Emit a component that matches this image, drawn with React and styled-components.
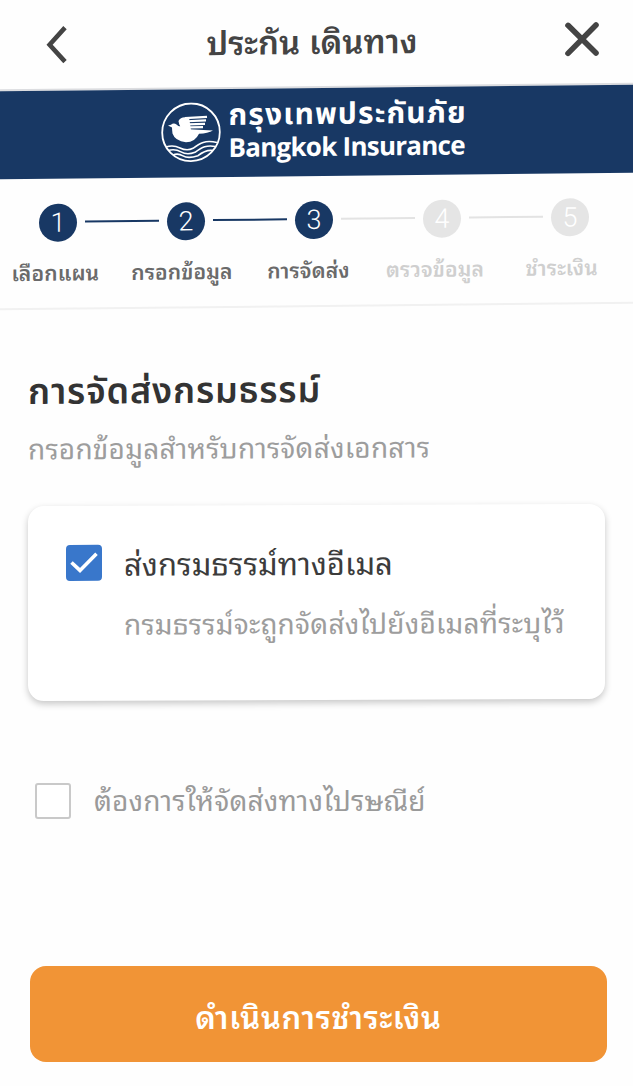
import React from "react";
import styled, { createGlobalStyle } from "styled-components";

const looped = `"Noto Sans Thai Looped", Loma, Garuda, Waree, "Noto Sans Thai", "Noto Sans", "Liberation Sans", sans-serif`;
const loopless = `"Noto Sans Thai", "Noto Sans", "Liberation Sans", sans-serif`;

const GlobalStyle = createGlobalStyle`
    * {
        box-sizing: border-box;
    }

    body {
        margin: 0;
        background: #fefefe;
        font-family: ${looped};
        overflow: hidden;
    }

    h1, h2, p {
        margin: 0;
    }
`;

const Page = styled.main`
    display: flex;
    flex-direction: column;
    width: 633px;
    height: 1086px;
    overflow: hidden;
`;

const Top = styled.header`
    flex: none;
    height: 307px;
    border-bottom: 2px solid #f1f1f1;
    transform: skewY(-0.6deg);
`;

const TitleBar = styled.div`
    display: flex;
    align-items: center;
    justify-content: space-between;
    height: 88px;
    padding: 0 33px 2px 46px;
    border-bottom: 2px solid #dcdde0;
`;

const Title = styled.h1`
    padding: 0 8px 4px 0;
    font-size: 33px;
    line-height: 48px;
    font-weight: 600;
    color: #444;
    white-space: nowrap;
`;

const IconButton = styled.button`
    display: flex;
    padding: 0;
    border: none;
    background: none;
    color: #444;
`;

const Banner = styled.div`
    display: flex;
    align-items: center;
    justify-content: center;
    gap: 8px;
    height: 88px;
    padding: 0 7px 2px 0;
    background: #183864;
    color: #fff;
`;

const BrandText = styled.div`
    display: flex;
    flex-direction: column;
    width: 237px;
    padding-bottom: 3px;
    font-weight: 700;
    white-space: nowrap;
`;

const BrandThai = styled.span`
    font-family: ${loopless};
    font-size: 30px;
    line-height: 34px;
    letter-spacing: 1.1px;
`;

const BrandLatin = styled.span`
    font-family: "Open Sans", "Noto Sans", sans-serif;
    font-size: 26px;
    line-height: 29px;
    letter-spacing: -0.75px;
`;

const Track = styled.div`
    display: flex;
    align-items: center;
    gap: 8px;
    padding: 25px 0 0 39px;
`;

const Circle = styled.span`
    display: flex;
    align-items: center;
    justify-content: center;
    flex: none;
    width: 38px;
    height: 38px;
    border-radius: 50%;
    background: ${(props) => (props.$done ? "#183864" : "#e5e5e5")};
    color: #fff;
    font-family: Roboto, "Liberation Sans", sans-serif;
    font-size: 27px;
    font-weight: 300;
`;

const Connector = styled.span`
    flex: none;
    width: 74px;
    height: 2px;
    margin-bottom: 3px;
    background: ${(props) => (props.$done ? "#183864" : "#e3e3e3")};
`;

const Labels = styled.div`
    display: grid;
    grid-template-columns: repeat(5, 126.6px);
    margin: 11px 0 0 -8px;
`;

const Label = styled.span`
    font-size: 21px;
    line-height: 38px;
    font-weight: 600;
    letter-spacing: 0.1px;
    text-align: center;
    white-space: nowrap;
    color: ${(props) => (props.$done ? "#6a6a6a" : "#cfcfcf")};
`;

const Content = styled.section`
    flex: 1;
    display: flex;
    flex-direction: column;
    padding: 56px 26px 24px 28px;
`;

const Heading = styled.h2`
    font-family: ${loopless};
    font-size: 36px;
    line-height: 56px;
    font-weight: 600;
    letter-spacing: 0.8px;
    color: #333;
    white-space: nowrap;
    transform: skewY(-0.4deg);
`;

const Subheading = styled.p`
    margin-top: 1px;
    font-size: 28px;
    line-height: 52px;
    letter-spacing: 0.2px;
    color: #9d9d9d;
    white-space: nowrap;
    transform: skewY(-0.3deg);
`;

const Card = styled.label`
    display: flex;
    align-items: flex-start;
    gap: 22px;
    width: 577px;
    height: 195px;
    margin-top: 33px;
    padding: 39px 0 0 38px;
    border-radius: 16px;
    background: #fff;
    box-shadow: 0 3px 7px rgba(0, 0, 0, 0.22);
    transform: skewY(-0.22deg);
`;

const Box = styled.span`
    display: flex;
    align-items: center;
    justify-content: center;
    flex: none;
    width: 36px;
    height: 36px;
    border-radius: ${(props) => (props.$checked ? "4px" : "3px")};
    border: ${(props) => (props.$checked ? "none" : "2px solid #c9c9c9")};
    background: ${(props) => (props.$checked ? "#3977cb" : "#fff")};
`;

const OptionTitle = styled.p`
    font-size: 31px;
    line-height: 34px;
    color: #3c3c3c;
    white-space: nowrap;
`;

const OptionText = styled.p`
    margin-top: 24px;
    font-size: 28px;
    line-height: 40px;
    letter-spacing: 0.2px;
    color: #9d9d9d;
    white-space: nowrap;
`;

const PostOption = styled.label`
    display: flex;
    align-items: center;
    gap: 23px;
    height: 40px;
    margin: 81px 0 0 7px;
    font-size: 28px;
    letter-spacing: 0.15px;
    color: #9a9a9a;
    white-space: nowrap;
`;

const PostText = styled.span`
    padding-bottom: 6px;
`;

const SubmitButton = styled.button`
    width: 577px;
    height: 96px;
    margin: auto 0 0 2px;
    padding: 2px 0 0;
    border: none;
    border-radius: 16px;
    background: #f19436;
    color: #fff;
    font-family: inherit;
    font-size: 31px;
    font-weight: 600;
    letter-spacing: 0.7px;
`;

const steps = [
    "เลือกแผน",
    "กรอกข้อมูล",
    "การจัดส่ง",
    "ตรวจข้อมูล",
    "ชำระเงิน",
];
const currentStep = 3;

function BirdLogo() {
    return (
        <svg width="60" height="60" viewBox="0 0 60 60" fill="none" stroke="#fff">
            <circle cx="30" cy="30" r="28.8" strokeWidth="1.8" />
            {/* head, body and tail */}
            <path
                fill="#fff"
                stroke="none"
                d="M7 23 L10 22.3 Q12.5 19.8 15.5 22 Q17 24 20 24 Q16.5 20 18.5 17.5 L22 20 L28 27 L52 28.3 Q47 31 38 31.5 Q34 40 25 40 Q14 38.5 11.5 31 Q11 27 11 25 Z"
            />
            {/* wing feathers */}
            <path fill="#fff" stroke="none" d="M17.5 18.5 Q19 14.8 24 14.8 L28 15 L30 28 L20 27 Z" />
            <g strokeWidth="2.2">
                <path d="M24 15.8 L46 14.8" />
                <path d="M26 18.9 L45 18.3" />
                <path d="M27 22 L44 21.7" />
                <path d="M28 25.1 L42 25" />
            </g>
            <g strokeWidth="1.6">
                <path d="M5 44.5 Q12 42 19 45.5 T32 46 C39 41 44 37.5 56 40.5" />
                <path d="M7 48 Q14 46 20 49.5 T34 50 C41 45 46 42.5 54.5 44.5" />
                <path d="M12 52.5 Q17 50.5 22 53.5 T37 53.5 C42 49.5 46 47.5 52 48.5" />
            </g>
        </svg>
    );
}

function App() {
    return (
        <Page>
            <GlobalStyle />
            <Top>
                <TitleBar>
                    <IconButton aria-label="Back">
                        <svg width="22" height="38" viewBox="0 0 22 38" fill="none" stroke="currentColor" strokeWidth="4.6">
                            <path d="M19 2 L3.6 19 L19 36" />
                        </svg>
                    </IconButton>
                    <Title>ประกัน เดินทาง</Title>
                    <IconButton aria-label="Close">
                        <svg width="36" height="36" viewBox="0 0 36 36" fill="none" stroke="currentColor" strokeWidth="5.6" strokeLinecap="round">
                            <path d="M4 4 L32 32 M32 4 L4 32" />
                        </svg>
                    </IconButton>
                </TitleBar>
                <Banner>
                    <BirdLogo />
                    <BrandText>
                        <BrandThai>กรุงเทพประกันภัย</BrandThai>
                        <BrandLatin>Bangkok Insurance</BrandLatin>
                    </BrandText>
                </Banner>
                <Track>
                    {steps.map((step, i) => (
                        <React.Fragment key={step}>
                            {i > 0 && <Connector $done={i < currentStep} />}
                            <Circle $done={i < currentStep}>{i + 1}</Circle>
                        </React.Fragment>
                    ))}
                </Track>
                <Labels>
                    {steps.map((step, i) => (
                        <Label key={step} $done={i < currentStep}>
                            {step}
                        </Label>
                    ))}
                </Labels>
            </Top>
            <Content>
                <Heading>การจัดส่งกรมธรรม์</Heading>
                <Subheading>กรอกข้อมูลสำหรับการจัดส่งเอกสาร</Subheading>
                <Card>
                    <Box $checked>
                        <svg width="28" height="22" viewBox="0 0 28 22" fill="none" stroke="#fff" strokeWidth="3.6">
                            <path d="M1.5 10.5 L10 18.5 L26.5 2" />
                        </svg>
                    </Box>
                    <div>
                        <OptionTitle>ส่งกรมธรรม์ทางอีเมล</OptionTitle>
                        <OptionText>กรมธรรม์จะถูกจัดส่งไปยังอีเมลที่ระบุไว้</OptionText>
                    </div>
                </Card>
                <PostOption>
                    <Box />
                    <PostText>ต้องการให้จัดส่งทางไปรษณีย์</PostText>
                </PostOption>
                <SubmitButton>ดำเนินการชำระเงิน</SubmitButton>
            </Content>
        </Page>
    );
}

export default App;
